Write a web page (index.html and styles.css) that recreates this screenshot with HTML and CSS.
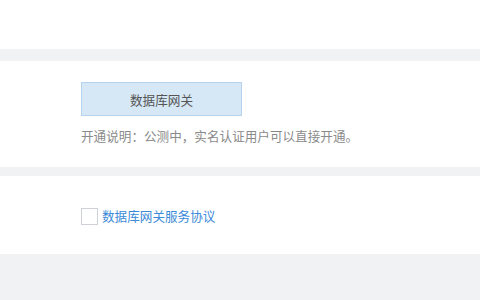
FILE: index.html
```html
<!DOCTYPE html>
<html lang="zh-CN">
<head>
<meta charset="utf-8">
<link rel="stylesheet" href="styles.css">
</head>
<body>
<div class="page">
  <section class="panel panel-top"></section>
  <section class="panel panel-product">
    <div class="product-btn">数据库网关</div>
    <p class="note">开通说明：公测中，实名认证用户可以直接开通。</p>
  </section>
  <section class="panel panel-agree">
    <label class="agree">
      <span class="checkbox"></span>
      <a class="agree-link">数据库网关服务协议</a>
    </label>
  </section>
</div>
</body>
</html>
```
FILE: styles.css
```css
html, body {
  margin: 0;
  padding: 0;
  background: #f1f2f4;
  font-family: "Noto Sans CJK SC", "Noto Sans", sans-serif;
  font-size: 12.6px;
}
.page {
  display: flex;
  flex-direction: column;
  width: 480px;
}
.panel {
  background: #ffffff;
}
.panel-top {
  height: 49px;
  margin-bottom: 12px;
}
.panel-product {
  padding: 21px 0 21px 81px;
  margin-bottom: 9px;
}
.product-btn {
  box-sizing: border-box;
  width: 161px;
  height: 34px;
  background: #d6e8f6;
  border: 1px solid #b5d3ee;
  color: #555555;
  display: flex;
  align-items: center;
  justify-content: center;
}
.note {
  margin: 10px 0 0 0;
  line-height: 20px;
  color: #8a8a8a;
}
.panel-agree {
  padding: 30px 0 28px 81px;
}
.agree {
  display: flex;
  align-items: center;
  gap: 4px;
  height: 20px;
}
.checkbox {
  box-sizing: border-box;
  width: 17px;
  height: 17px;
  border: 1px solid #cfd3d8;
  background: #ffffff;
}
.agree-link {
  color: #3b8ad9;
  line-height: 20px;
}
```
